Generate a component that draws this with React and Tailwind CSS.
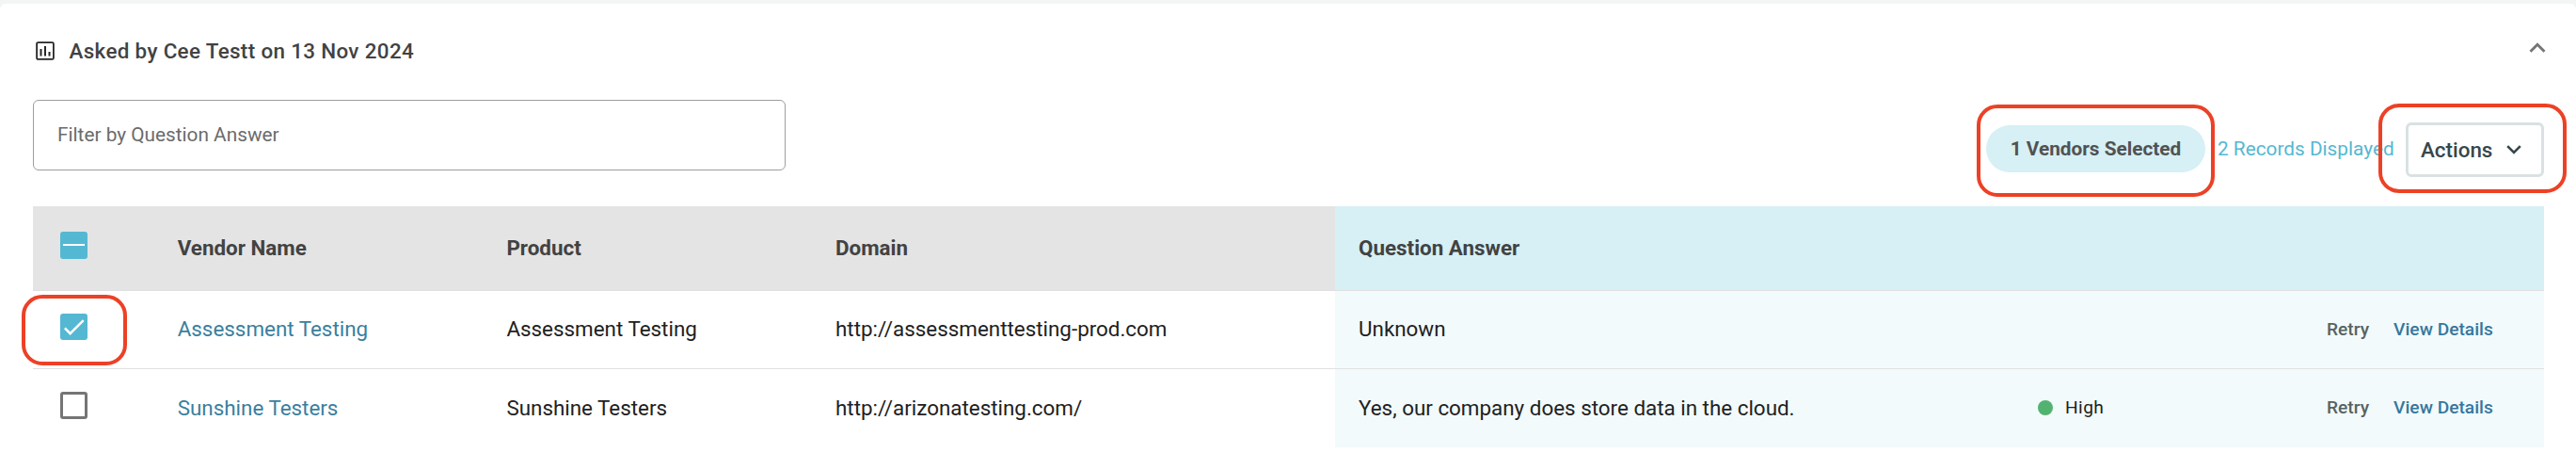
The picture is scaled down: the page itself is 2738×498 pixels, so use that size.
import React from "react";

const rows = [
  {
    name: "Assessment Testing",
    product: "Assessment Testing",
    domain: "http://assessmenttesting-prod.com",
    answer: "Unknown",
    checked: true,
  },
  {
    name: "Sunshine Testers",
    product: "Sunshine Testers",
    domain: "http://arizonatesting.com/",
    answer: "Yes, our company does store data in the cloud.",
    rating: "High",
    checked: false,
  },
];

const columns =
  "grid grid-cols-[153px_350px_349px_532px_747px_307px_231px] w-[2669px]";

function PollIcon() {
  return (
    <svg viewBox="0 0 26 26" className="size-[26px]" aria-hidden="true">
      <rect x="4.1" y="4.1" width="17.8" height="17.8" rx="1.4" fill="none" stroke="#262626" strokeWidth="1.8" />
      <path d="M8.5 11v7.5M13 8v10.500M17.500 14v4.500" fill="none" stroke="#262626" strokeWidth="2" />
    </svg>
  );
}

function Highlight({ className }) {
  return (
    <span
      className={
        "pointer-events-none absolute rounded-[22px] border-4 border-[#ec4126] " + className
      }
    />
  );
}

function Checkbox({ state }) {
  if (state === "empty") {
    return <span className="mb-[6px] block size-[29px] rounded-[3px] border-3 border-[#757575]" />;
  }
  return (
    <span
      className={
        state === "mixed"
          ? "mb-[6px] block h-[29px] w-[29px] rounded-[3px] bg-[#55b8d2]"
          : "mb-[6px] block h-[28px] w-[29px] rounded-[3px] bg-[#55b8d2]"
      }
    >
      {state === "mixed" ? (
        <svg viewBox="0 0 29 29" className="size-[29px]" aria-hidden="true">
          <path d="M3 14h23" fill="none" stroke="#fff" strokeWidth="2" />
        </svg>
      ) : (
        <svg viewBox="0 0 29 28" className="h-[28px] w-[29px]" aria-hidden="true">
          <path d="M4.9 15.4l5.7 5.8L24.7 7.2" fill="none" stroke="#fff" strokeWidth="2.5" />
        </svg>
      )}
    </span>
  );
}

export default function App() {
  return (
    <div className="h-[498px] w-[2738px] overflow-hidden bg-[#f3f5f5] pt-1 font-[Roboto,sans-serif] text-[22.4px] text-[#212121]">
      <section className="h-[494px] rounded-t-[6px] bg-white pl-[35px]">
        <header className="flex h-[102px] w-[2679px] items-start justify-between">
          <div className="mt-[37px] flex h-[26px] items-center gap-[12.5px]">
            <PollIcon />
            <h2 className="leading-[26px] font-medium tracking-[0.35px] text-[#424242]">
              Asked by Cee Testt on 13 Nov 2024
            </h2>
          </div>
          <svg viewBox="0 0 24 24" className="mt-[30px] size-[34px] fill-[#757575]" aria-hidden="true">
            <path d="M12 8l-6 6 1.41 1.41L12 10.83l4.59 4.58L18 14z" />
          </svg>
        </header>

        <div className="flex h-[113px] w-[2669px] items-start justify-between">
          <div className="flex h-[75px] w-[800px] items-center rounded-[6px] border border-[#9e9e9e] pl-[25px] text-[20.8px] text-[#6b6b6b]">
            Filter by Question Answer
          </div>
          <div className="mt-[24px] flex items-start">
            <div className="relative mt-[3px] flex h-[50px] w-[233px] items-center justify-center rounded-full bg-[#d6f0f5] pt-px text-[20.8px] font-bold whitespace-nowrap text-[#525252]">
              1 Vendors Selected
              <Highlight className="top-[-22px] left-[-10px] h-[98px] w-[253px]" />
            </div>
            <span className="mt-[3px] ml-[13px] w-[200px] text-[20.8px] leading-[50px] text-[#55b8d2]">
              2 Records Displayed
            </span>
            <button className="relative flex h-[58px] w-[147px] items-center rounded-[6px] border-3 border-[#d9e1e2] pl-[13px] font-medium text-[#37474a]">
              <span className="pt-px">Actions</span>
              <svg viewBox="0 0 16 10" className="ml-[14.5px] h-[10px] w-[16px]" aria-hidden="true">
                <path d="M1.2 1.2L8 8l6.8-6.8" fill="none" stroke="#37474a" strokeWidth="2.6" />
              </svg>
              <Highlight className="top-[-23px] left-[-32px] h-[95px] w-[200px]" />
            </button>
          </div>
        </div>

        <div className="w-[2669px]">
          <div
            className={
              columns + " h-[90px] border-b border-[#e0e0e0] font-bold text-[#424242]"
            }
          >
            <div className="flex items-center bg-[#e4e4e4] pl-[29px]">
              <Checkbox state="mixed" />
            </div>
            <div className="flex items-center bg-[#e4e4e4] pl-[0.7px]">Vendor Name</div>
            <div className="flex items-center bg-[#e4e4e4] pl-[0.4px]">Product</div>
            <div className="flex items-center bg-[#e4e4e4] pl-px">Domain</div>
            <div className="col-span-3 flex items-center bg-[#d6f0f5] pl-[25px]">
              Question Answer
            </div>
          </div>

          {rows.map((row) => (
            <div
              key={row.name}
              className={columns + " h-[83px] border-b border-[#e0e0e0] last:border-b-0"}
            >
              <div className="flex items-center pl-[29px]">
                <div className="relative">
                  <Checkbox state={row.checked ? "checked" : "empty"} />
                  {row.checked && (
                    <Highlight className="top-[-20px] left-[-41px] h-[75px] w-[112px]" />
                  )}
                </div>
              </div>
              <div className="flex items-center pl-[0.7px] text-[#3a7f9e]">{row.name}</div>
              <div className="flex items-center pl-[0.4px]">{row.product}</div>
              <div className="flex items-center pl-px">{row.domain}</div>
              <div className="flex items-center bg-[#f2fafc] pl-[25px]">{row.answer}</div>
              <div className="flex items-center bg-[#f2fafc]">
                {row.rating && (
                  <div className="flex items-center gap-[13px] pb-[1px] text-[19.2px] tracking-[0.4px]">
                    <span className="size-4 rounded-full bg-[#52b370]" />
                    {row.rating}
                  </div>
                )}
              </div>
              <div className="flex items-center gap-[26px] bg-[#f2fafc] text-[19.2px] font-medium whitespace-nowrap">
                <span className="text-[#566364]">Retry</span>
                <span className="text-[#37779c]">View Details</span>
              </div>
            </div>
          ))}
        </div>
      </section>
    </div>
  );
}
